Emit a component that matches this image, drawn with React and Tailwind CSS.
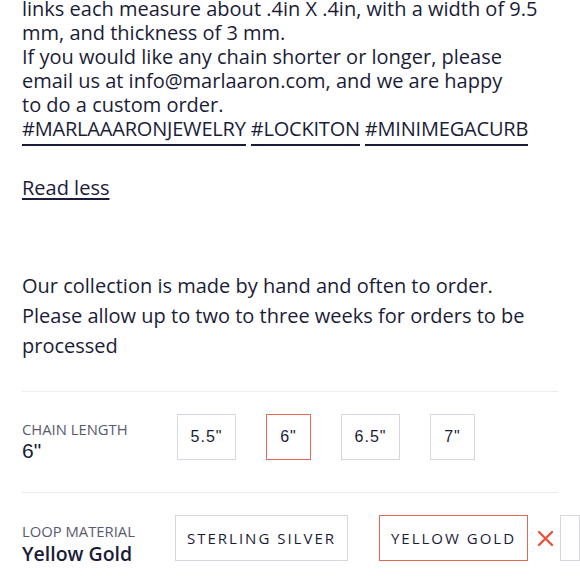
import React from "react";

const ink = "text-[#1b1c37]";

function Opt({ children, selected, className = "" }) {
  return (
    <div
      className={`h-[46px] flex items-center justify-center border ${
        selected ? "border-[#df6a55]" : "border-[#d6d7de]"
      } ${className}`}
    >
      {children}
    </div>
  );
}

export default function App() {
  return (
    <div className="w-[580px] h-[580px] overflow-hidden bg-white font-['Open_Sans',sans-serif]">
      <div className={`pl-[22px] -mt-[3px] text-[20px] leading-[24px] ${ink} whitespace-nowrap`}>
        <div>links each measure about .4in X .4in, with a width of 9.5</div>
        <div>mm, and thickness of 3 mm.</div>
        <div>If you would like any chain shorter or longer, please</div>
        <div>email us at info@marlaaron.com, and we are happy</div>
        <div>to do a custom order.</div>
        <div className="flex gap-[5px] tracking-[-0.2px]">
          <span className="border-b-2 border-[#1b1c37] pb-[3px]">#MARLAAARONJEWELRY</span>
          <span className="border-b-2 border-[#1b1c37] pb-[3px]">#LOCKITON</span>
          <span className="border-b-2 border-[#1b1c37] pb-[3px]">#MINIMEGACURB</span>
        </div>
        <div className="mt-[30px]">
          <span className="underline underline-offset-[3px] decoration-[1.5px]">Read less</span>
        </div>
      </div>

      <div className={`pl-[22px] mt-[71px] text-[20px] leading-[30px] ${ink} whitespace-nowrap`}>
        <div>Our collection is made by hand and often to order.</div>
        <div>Please allow up to two to three weeks for orders to be</div>
        <div>processed</div>
      </div>

      <div className="mx-[22px] mt-[30px] border-t border-[#ededf0]" />

      <div className="flex items-start pl-[22px] pt-[22px] h-[100px]">
        <div className="w-[155px] pt-[6px]">
          <div className="text-[14.8px] leading-[18px] text-[#585a70]">CHAIN LENGTH</div>
          <div className={`text-[21px] leading-[26px] ${ink} font-['Liberation_Sans',sans-serif]`}>6"</div>
        </div>
        <div className={`flex gap-[30px] text-[16px] tracking-[1px] ${ink} font-['Liberation_Sans',sans-serif]`}>
          <Opt className="w-[59px]">5.5"</Opt>
          <Opt className="w-[45px]" selected>6"</Opt>
          <Opt className="w-[59px]">6.5"</Opt>
          <Opt className="w-[45px]">7"</Opt>
        </div>
      </div>

      <div className="mx-[22px] border-t border-[#ededf0]" />

      <div className="flex items-start pl-[22px] pt-[22px]">
        <div className="w-[155px] pt-[7px]">
          <div className="text-[14.8px] leading-[18px] text-[#585a70]">LOOP MATERIAL</div>
          <div className={`text-[19.5px] leading-[28px] font-semibold ${ink}`}>Yellow Gold</div>
        </div>
        <div className={`flex items-center text-[15px] tracking-[2px] ${ink}`}>
          <Opt className="w-[173px]">STERLING SILVER</Opt>
          <Opt className="w-[149px] ml-[31px]" selected>YELLOW GOLD</Opt>
          <svg className="ml-[9px]" width="17" height="17" viewBox="0 0 17 17">
            <path d="M2 2 L15 15 M15 2 L2 15" stroke="#e6543c" strokeWidth="2.4" strokeLinecap="round" />
          </svg>
          <div className="ml-[6px] w-[20px] h-[46px] border border-[#d6d7de]" />
        </div>
      </div>
    </div>
  );
}
